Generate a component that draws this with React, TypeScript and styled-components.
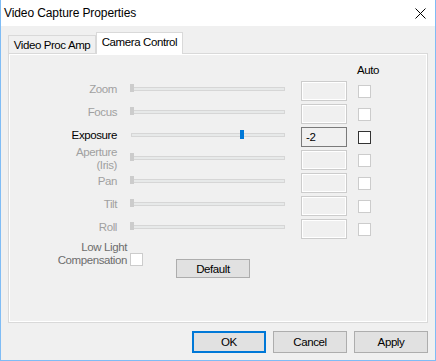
import React from "react";
import styled, { createGlobalStyle } from "styled-components";

const GlobalStyle = createGlobalStyle`
  html, body {
    margin: 0;
    padding: 0;
    background: #ffffff;
  }
  body {
    font-family: "Liberation Sans", Arial, sans-serif;
  }
`;

const Window = styled.div`
  width: 436px;
  height: 361px;
  box-sizing: border-box;
  border: 1px solid #7fbcf5;
  border-top: none;
  display: flex;
  flex-direction: column;
  background: #f0f0f0;
`;

const TitleBar = styled.div`
  height: 26px;
  flex: none;
  background: #ffffff;
  display: flex;
  align-items: center;
  justify-content: space-between;
  padding: 0 9px 0 3px;
  font-size: 12px;
  letter-spacing: -0.1px;
  color: #000;
`;

const Body = styled.div`
  flex: 1;
  display: flex;
  flex-direction: column;
  padding: 6px 7px 0;
  font-size: 11.5px;
  letter-spacing: -0.4px;
  color: #000;
`;

const TabStrip = styled.div`
  height: 22px;
  display: flex;
  align-items: flex-end;
  margin-bottom: -1px;
  position: relative;
  z-index: 1;
`;

const Tab = styled.div<{ $active?: boolean }>`
  box-sizing: border-box;
  width: ${(p) => (p.$active ? 87 : 88)}px;
  height: ${(p) => (p.$active ? 22 : 18)}px;
  margin-bottom: ${(p) => (p.$active ? 0 : 1)}px;
  padding-bottom: ${(p) => (p.$active ? 3 : 0)}px;
  border: 1px solid #d9d9d9;
  border-bottom: none;
  background: ${(p) => (p.$active ? "#ffffff" : "#f0f0f0")};
  display: flex;
  align-items: center;
  justify-content: center;
  white-space: nowrap;
`;

const Panel = styled.div`
  flex: none;
  height: 270px;
  box-sizing: border-box;
  border: 1px solid #d9d9d9;
  background: #f0f0f0;
  box-shadow: inset 1px 1px 0 #ffffff, inset -1px -1px 0 #ffffff;
  padding-top: 8px;
`;

const ControlGrid = styled.div`
  display: grid;
  grid-template-columns: 119px 173px 57px 13px;
  grid-template-rows: 16px repeat(7, 20px);
  row-gap: 3px;
`;

const AutoHeader = styled.div`
  grid-column: 4;
  grid-row: 1;
  align-self: center;
  margin-left: -1px;
  white-space: nowrap;
`;

const Label = styled.div<{ $enabled: boolean }>`
  grid-column: 1;
  align-self: center;
  margin-bottom: 3px;
  padding-right: 11px;
  text-align: right;
  white-space: pre-line;
  line-height: 13px;
  color: ${(p) => (p.$enabled ? "#000000" : "#a0a0a0")};
`;

const Slider = styled.div`
  grid-column: 2;
  align-self: center;
  width: 160px;
  height: 16px;
  margin-bottom: 4px;
  position: relative;
`;

const Track = styled.div`
  position: absolute;
  left: 3px;
  top: 6px;
  width: 154px;
  height: 4px;
  box-sizing: border-box;
  border: 1px solid #d6d6d6;
  background: #e7e9e9;
`;

const Thumb = styled.div<{ $enabled: boolean }>`
  position: absolute;
  top: 3px;
  width: 4px;
  height: ${(p) => (p.$enabled ? 9 : 8)}px;
  background: ${(p) => (p.$enabled ? "#0078d7" : "#cccccc")};
`;

const ValueBox = styled.div<{ $enabled: boolean }>`
  grid-column: 3;
  width: 46px;
  height: 20px;
  box-sizing: border-box;
  border: 1px solid ${(p) => (p.$enabled ? "#7a7a7a" : "#cccccc")};
  box-shadow: ${(p) => (p.$enabled ? "none" : "inset 0 0 0 1px #ffffff")};
  background: #f0f0f0;
  padding-left: 4px;
  display: flex;
  align-items: center;
`;

const CheckBox = styled.div<{ $enabled: boolean }>`
  width: 13px;
  height: 13px;
  box-sizing: border-box;
  border: 1px solid ${(p) => (p.$enabled ? "#333333" : "#cccccc")};
  background: #ffffff;
  align-self: center;
  flex: none;
`;

const AutoCell = styled(CheckBox)`
  grid-column: 4;
`;

const LowLightRow = styled.div`
  display: flex;
  align-items: flex-start;
  margin-top: 2px;
`;

const LowLightLabel = styled.div`
  width: 118px;
  text-align: right;
  line-height: 13px;
  color: #6d6d6d;
`;

const LowLightCheck = styled(CheckBox)`
  margin-left: 3px;
`;

const Button = styled.button<{ $primary?: boolean }>`
  font: inherit;
  letter-spacing: inherit;
  color: #000;
  width: 74px;
  height: 22px;
  box-sizing: border-box;
  padding: 0;
  background: #e1e1e1;
  border: 1px solid ${(p) => (p.$primary ? "#0078d7" : "#adadad")};
  box-shadow: ${(p) => (p.$primary ? "inset 0 0 0 1px #0078d7" : "none")};
  border-radius: 0;
`;

const DefaultButton = styled(Button)`
  height: 19px;
  margin-left: 33px;
  margin-top: 18px;
`;

const ButtonRow = styled.div`
  margin-top: 8px;
  display: flex;
  justify-content: flex-end;
  gap: 7px;
`;

type Control = {
  label: string;
  enabled: boolean;
  value?: number;
};

const controls: Control[] = [
  { label: "Zoom", enabled: false },
  { label: "Focus", enabled: false },
  { label: "Exposure", enabled: true, value: -2 },
  { label: "Aperture\n(Iris)", enabled: false },
  { label: "Pan", enabled: false },
  { label: "Tilt", enabled: false },
  { label: "Roll", enabled: false },
];

const EXPOSURE_MIN = -13;
const EXPOSURE_MAX = 2;
const THUMB_TRAVEL = 148;

const CloseIcon = () => (
  <svg width="11" height="11" viewBox="0 0 11 11">
    <path d="M0.5 0.5 L10.5 10.5 M10.5 0.5 L0.5 10.5" stroke="#000" strokeWidth="1" fill="none" />
  </svg>
);

export default function App() {
  return (
    <>
      <GlobalStyle />
      <Window>
        <TitleBar>
          <span>Video Capture Properties</span>
          <CloseIcon />
        </TitleBar>
        <Body>
          <TabStrip>
            <Tab>Video Proc Amp</Tab>
            <Tab $active>Camera Control</Tab>
          </TabStrip>
          <Panel>
            <ControlGrid>
              <AutoHeader>Auto</AutoHeader>
              {controls.map((c, i) => {
                const pos =
                  c.value !== undefined
                    ? 3 + ((c.value - EXPOSURE_MIN) / (EXPOSURE_MAX - EXPOSURE_MIN)) * THUMB_TRAVEL
                    : 2;
                return (
                  <React.Fragment key={c.label}>
                    <Label $enabled={c.enabled} style={{ gridRow: i + 2 }}>
                      {c.label}
                    </Label>
                    <Slider style={{ gridRow: i + 2 }}>
                      <Track />
                      <Thumb $enabled={c.enabled} style={{ left: Math.round(pos) }} />
                    </Slider>
                    <ValueBox $enabled={c.enabled} style={{ gridRow: i + 2 }}>
                      {c.value !== undefined ? c.value : ""}
                    </ValueBox>
                    <AutoCell $enabled={c.enabled} style={{ gridRow: i + 2 }} />
                  </React.Fragment>
                );
              })}
            </ControlGrid>
            <LowLightRow>
              <LowLightLabel>
                Low Light
                <br />
                Compensation
              </LowLightLabel>
              <LowLightCheck $enabled={false} />
              <DefaultButton>Default</DefaultButton>
            </LowLightRow>
          </Panel>
          <ButtonRow>
            <Button $primary>OK</Button>
            <Button>Cancel</Button>
            <Button>Apply</Button>
          </ButtonRow>
        </Body>
      </Window>
    </>
  );
}
